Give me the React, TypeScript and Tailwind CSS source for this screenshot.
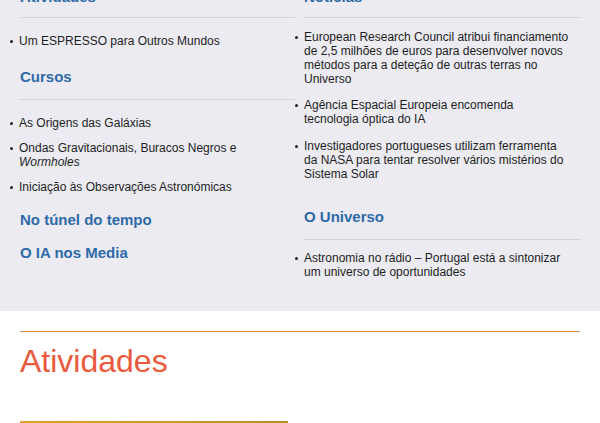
import React from 'react'

const Bullet = ({ children, className = '' }: { children: React.ReactNode; className?: string }) => (
  <li className={`flex gap-[6px] ${className}`}>
    <span className="mt-[6px] h-[3px] w-[3px] shrink-0 rounded-full bg-[#1e1e1e]" />
    <span className="whitespace-nowrap">{children}</span>
  </li>
)

const Heading = ({ children, className = '' }: { children: React.ReactNode; className?: string }) => (
  <h3 className={`text-[15px] font-bold leading-[18px] text-[#2f6aa8] ${className}`}>{children}</h3>
)

const Divider = ({ className = '' }: { className?: string }) => (
  <div className={`h-px bg-[#d3d3da] ${className}`} />
)

export default function App() {
  return (
    <div className="w-[600px] bg-white text-[12px] leading-[14px] text-[#1e1e1e]" style={{ fontFamily: '"Liberation Sans", Arial, sans-serif' }}>
      <section className="h-[311px] overflow-hidden bg-[#ebebf1]">
        <div className="mt-[-12px] flex gap-[9px] pl-[20px]">
          {/* coluna esquerda */}
          <div className="w-[275px]">
            <Heading>Atividades</Heading>
            <Divider className="mt-[11px]" />
            <ul className="ml-[-10px] mt-[16px]">
              <Bullet>Um ESPRESSO para Outros Mundos</Bullet>
            </ul>
            <Heading className="mt-[20px]">Cursos</Heading>
            <Divider className="mt-[13px]" />
            <ul className="ml-[-10px] mt-[16px]">
              <Bullet>As Origens das Galáxias</Bullet>
              <Bullet className="mt-[11px]">
                Ondas Gravitacionais, Buracos Negros e
                <br />
                <em>Wormholes</em>
              </Bullet>
              <Bullet className="mt-[11px]">Iniciação às Observações Astronómicas</Bullet>
            </ul>
            <Heading className="mt-[17px]">No túnel do tempo</Heading>
            <Heading className="mt-[15px]">O IA nos Media</Heading>
          </div>

          {/* coluna direita */}
          <div className="w-[277px]">
            <Heading>Notícias</Heading>
            <Divider className="mt-[11px]" />
            <ul className="ml-[-9px] mt-[12px]">
              <Bullet>
                European Research Council atribui financiamento
                <br />
                de 2,5 milhões de euros para desenvolver novos
                <br />
                métodos para a deteção de outras terras no
                <br />
                Universo
              </Bullet>
              <Bullet className="mt-[12px]">
                Agência Espacial Europeia encomenda
                <br />
                tecnologia óptica do IA
              </Bullet>
              <Bullet className="mt-[13px]">
                Investigadores portugueses utilizam ferramenta
                <br />
                da NASA para tentar resolver vários mistérios do
                <br />
                Sistema Solar
              </Bullet>
            </ul>
            <Heading className="mt-[27px]">O Universo</Heading>
            <Divider className="mt-[13px]" />
            <ul className="ml-[-9px] mt-[11px]">
              <Bullet>
                Astronomia no rádio – Portugal está a sintonizar
                <br />
                um universo de oportunidades
              </Bullet>
            </ul>
          </div>
        </div>
      </section>

      <section className="px-[20px]">
        <div className="mt-[20px] h-px bg-[#e0883c]" />
        <h2 className="mt-[13px] text-[32px] leading-[32px] text-[#ea5a3c]">Atividades</h2>
        <div className="mt-[44px] h-[4px] w-[268px] bg-gradient-to-r from-[#ea9a2a] to-[#bd8a35]" />
      </section>
    </div>
  )
}
